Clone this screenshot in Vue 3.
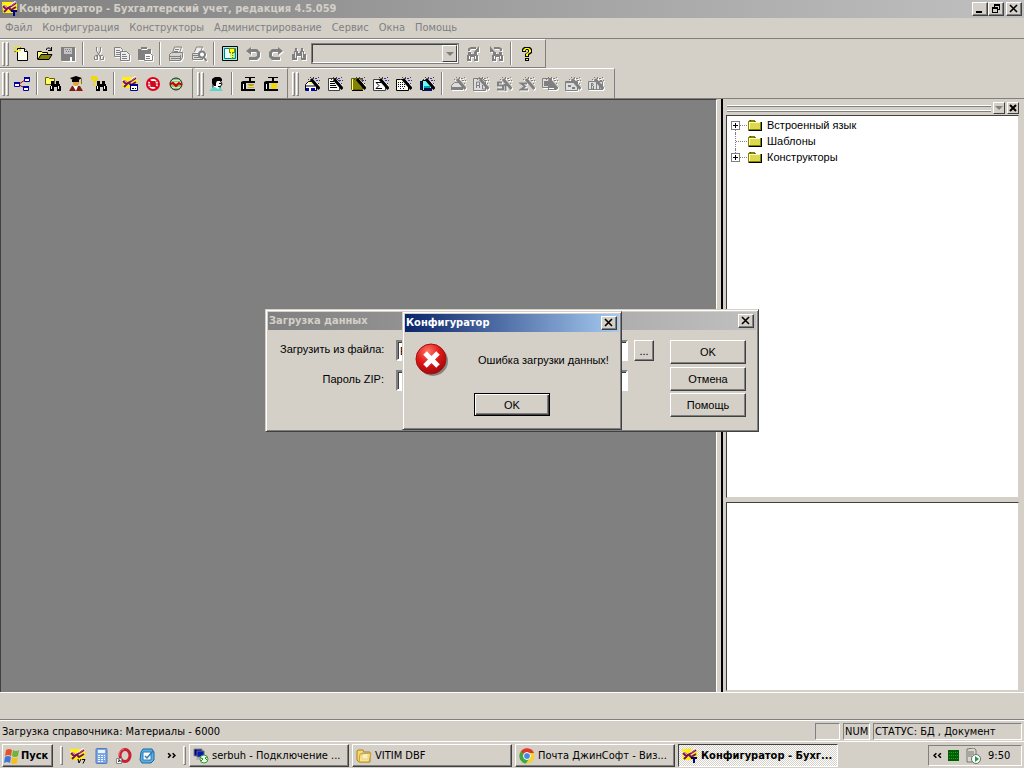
<script setup>
import { h, ref } from 'vue'

const K = '#000'
const G = '#808080'
const sparks = 'M6 1h1v1h-1zM9 1h1v2h-1zM14 1h1v1h-1zM15 4h1v1h-1zM14 7h1v1h-1zM4 3h1v1h-1z'
const wand = [
  ['M9 3L16 10', '', '#f4f4e8', 1],
  ['M7 3L15.5 13', '', K, 3],
  [sparks, '#424142'],
  ['M11 2h2v1h-2zM12 4h2v1h-2z', '#3030d0']
]
const grayWand = [
  ['M7 3L15.5 13', '', G, 3],
  [sparks + 'M11 2h2v1h-2zM12 4h2v1h-2z', G]
]
const binoc = 'M4 2h2v3h1v2h2v-2h1v-3h2v3h1v3h2v6h-5v-4h-4v4h-5v-6h2v-3h1z'
const smallBinoc = 'M6 5h3v3h2v-3h3v3h1v2h1v5h-4v-4h-3v4h-4v-5h1v-2z'
const flash = [
  ['M0 1h11l2 2h2v6h-2v3h-12z', '#fff200'],
  ['M1 4l3 4l4-2l6-5', '', '#fff', 3],
  ['M1 5l3 3l4-2l6-4M2 11l4-4M7 7l2 2l5-3', '', '#7b1052', 2],
  ['M2 4l3 2M9 5l4-3', '', '#e0508c', 1]
]

const icons = {
  app: [...flash, ['M9 9h6v2h-2v4h-2v-4h-2z', '#000084']],
  v7: [...flash, ['M8 11l1 4l2-4M12 11.5h3l-2 4', '', K, 1]],
  doc: [['M3.5 2.5h7l3 3v9h-10z', '#fffff0', K], ['M10.5 2.5v3h3', '#fff', K], ['M0 1h2v2h-2zM3 0h2v2h-2zM1 4h3v2h-3zM5 3h2v2h-2z', '#e8e800'], ['M0 5h2v1h-2zM6 1h1v1h-1z', '#848200']],
  open: [['M0.5 13.5v-8h4l1 1h5v3', '#ffff84', K], ['M1 13.5l3-5h11l-3 5z', '#848200', K], ['M9.5 4v-1l1-1h2l2 2M14.5 1v4M11 4.5h4', '', K]],
  save: [['M1 1h14v14h-13l-1-1z', G], ['M4 2h8v6h-8z', '#c6c3c6'], ['M5 3h1v1h-1zM7 3h1v1h-1zM9 3h1v1h-1zM6 5h1v1h-1zM8 5h1v1h-1zM10 5h1v1h-1z', G], ['M10 11h2v4h-2z', '#fff']],
  cut: [['M5.5 1v4l4 6M9.5 1v4l-4 6', '', G], ['M4.5 9.5h2v4h-3v-3zM9.5 9.5h2l1 1v3h-3z', '', G]],
  copy: [['M0.5 1.5h6l2 2v7h-8zM2 4.5h4M2 6.5h4M2 8.5h4', '#eee', G], ['M6.5 5.5h6l3 3v6h-9zM8 8.5h4M8 10.5h5M8 12.5h5', '#eee', G]],
  paste: [['M1 3h3v-2h6v2h4v11h-13z', G], ['M4.5 3.5h6', '', '#fff'], ['M7.5 7.5h6l2 2v5h-8zM9 10.5h4M9 12.5h4', '#fff', G]],
  print: [['M4.5 7l2-6h7l-2 6', '#eee', G], ['M7 3.5h4M6 5.5h4', '', G], ['M1.5 8.5l2-2h11v5l-2 3h-11z', '#d6d3ce', G], ['M2 10.5h10M3 12.5h9M12.5 9v5', '', G]],
  preview: [['M3.5 6l2-5h6l-2 5', '#eee', G], ['M1.5 7.5h10v6h-10z', '#ddd', G], ['M2 9.5h9M3 11.5h7', '', G], ['M8 8.5a3 3 0 1 0 6 0a3 3 0 1 0-6 0M12.5 11l3 4', '#fff', G, 2]],
  key: [['M0.5 0.5h15v14h-15z', '#9cf0f0', K, 1], ['M2.5 2.5h11v10h-11z', '#84e8e8', '#008284'], ['M3 3h4l2 9h-6z', '#e8ffff'], ['M7 2h6v5h-2v6h-2v-6h-2z', '#848200'], ['M8 3h4v3h-2v6h-1v-6h-1zM10 8h2v1h-2zM10 10h2v1h-2z', '#ffff00']],
  undo: [['M1 5l5-4v2h6l3 3v5l-3 3h-8v-3h6l2-1v-3l-1-1h-5v3z', G]],
  redo: [['M15 5l-5-4v2h-6l-3 3v5l3 3h8v-3h-6l-2-1v-3l1-1h5v3z', G]],
  find: [[binoc, G], ['M4.5 6v6M11.5 6v6', '', '#e8e8e8']],
  findNext: [['M3 6h3v2h3v-2h3v3h1v6h-4v-4h-3v4h-4v-6h1z', G], ['M4 5v-2l2-1h5', '', G, 2], ['M14 0v6h-5z', G], ['M4.5 10v3M10.5 10v3', '', '#fff']],
  findPrev: [['M5 6h3v2h3v-2h3v3h1v6h-4v-4h-3v4h-4v-6h1z', G], ['M13 5v-2l-2-1h-5', '', G, 2], ['M2 0v6h5z', G], ['M6.5 10v3M12.5 10v3', '', '#fff']],
  help: [['M3 5v-2l2-2h6l2 2v4l-3 2v2h-4v-3l3-2v-2h-2v2h-4zM6 12h4v3h-4z', K], ['M4 4l2-2h4l2 2v2l-3 2v2h-2v-2l3-2v-2l-1-1h-2l-1 2h-2zM7 13h2v1h-2z', '#ffff00']],
  tree: [['M5 8L11 4M5 9l6 3', '', '#b00000'], ['M0.5 6.5h5v4h-5zM10.5 1.5h5v4h-5zM9.5 10.5h5v4h-5z', '#fff', '#0000a5'], ['M0 6h6v2h-6zM10 1h6v2h-6zM9 10h6v2h-6z', '#0000a5']],
  folderFind: [['M0.5 1.5h3l1 1h5v6h-9z', '#ffff63', '#636100'], [smallBinoc, K], ['M6 10h1v3h-1zM13 10h1v3h-1z', '#fff']],
  person: [['M5 4h6v4l-3 3l-3-3z', '#e7a542'], ['M2 2l6-2l6 2l-5 3h-3zM4 4h7v2h-7z', K], ['M1 15l3-5h8l3 5z', '#7b2010'], ['M5 10h5l-2 5z', '#fff'], ['M13.5 3v5', '', '#848200']],
  ask: [['M0 4v-2l1-2h4l2 2v2l-3 2v1h-2v-2l2-2v-1h-1v2zM2 8h2v2h-2z', '#f0d800'], [smallBinoc, K], ['M6 10h1v3h-1zM13 10h1v3h-1z', '#fff']],
  flashForm: [...flash, ['M8.5 8.5h7v6h-7z', '#fff', '#000084'], ['M8 8h8v2h-8z', '#0000a5'], ['M10 12h2v1h-2zM13 12h1v1h-1z', K]],
  noBug: [['M2 8a6 6 0 1 0 12 0a6 6 0 1 0-12 0', '#fff', '#e00018', 2], ['M6 5h4l1 3l-1 3h-4l-1-3z', '#c01828'], ['M4 5l3 2M12 5l-3 2M4 11l3-2M12 11l-3-2M3 8h10', '', '#c01828'], ['M4 4l8 8', '', '#e00018', 2]],
  chart: [['M2 8a6 6 0 1 0 12 0a6 6 0 1 0-12 0', '#8cc87c', '#212021', 1], ['M4 4.5h8M3 6.5h10M4 11.5h8', '', '#d0f0c0'], ['M2 8l3-1l3 3l3-3l3 2', '', '#d00000', 2]],
  head: [['M4 4h7l2 4l-2 3v3h-7z', '#fff', K], ['M3 3l3-2h5l2 2v2h-5l-1 2v3h-2l-2-3z', K], ['M0 15l4-4h2l3 2l2-2l3 4z', '#5ad6ce'], ['M10 7h2v1h-2zM9 10h2v1h-2z', K]],
  press: [['M5 1h10v1h-4v4h-2v-4h-4z', K], ['M1 6l2-1h12v2h-9v6h9v2h-14z', K], ['M3 8h1v5h-1z', '#fff'], ['M8 8h6v1l-2 1h-2l-2-1z', '#b5a600'], ['M8 11h6v1h-6z', '#c8b800']],
  pressBall: [['M5 1h10v1h-4v4h-2v-4h-4z', K], ['M1 6l2-1h12v2h-9v6h9v2h-14z', K], ['M3 8h1v5h-1z', '#fff'], ['M9 7h4l1 2v2l-1 2h-4l-1-2v-2z', '#f0d800']],
  wandHouse: [['M1.5 8.5l3-3h4l4 4v5h-11z', '#fff', K], ['M2 9h9v2h-9z', '#848284'], ['M2 12h9v3h-9z', '#0000a6'], ['M5 12h2v3h-2z', '#fff'], ['M5 7h3v1h-3z', '#ffff00'], ...wand],
  wandDoc: [['M1.5 2.5h8l3 3v9h-11z', '#fff', '#424142'], ...wand, ['M3 5.5h4M3 7.5h5M3 9.5h6M3 11.5h7', '', K]],
  wandBook: [['M1.5 2.5h11v11h-11z', '#848200', '#636100'], ['M2.5 3v11', '', '#ffff84'], ['M2 14.5h11', '', K], ...wand],
  wandSum: [['M0.5 3.5h9l3 3v8h-12z', '#fff', '#424142'], ...wand, ['M8 6.5h-5l3 3l-3 3h6', '', K]],
  wandGrid: [['M0.5 3.5h9l3 3v8h-12z', '#ffffde', K], ...wand, ['M2 6h1v1h-1zM4 6h1v1h-1zM6 6h1v1h-1zM2 8h1v1h-1zM4 8h1v1h-1zM6 8h1v1h-1zM8 8h1v1h-1zM2 10h1v1h-1zM4 10h1v1h-1zM6 10h1v1h-1zM8 10h1v1h-1zM4 12h1v1h-1zM7 12h1v1h-1z', '#00007b']],
  wandReport: [['M3.5 4.5h5l4 4v6h-9z', '#63ffff', K], ['M1 5h2v9h-2zM5 12h8v3h-8z', '#101050'], ['M5 10h6v2h-6z', '#00a6a5'], ...wand],
  g1: [['M1.5 9.5l3-3h4l4 4v3h-11z', '#ddd', G], ['M1 11h12v3h-12z', G], ...grayWand],
  g2: [['M0.5 2.5h9l3 3v9h-12z', '#ddd', G], ...grayWand, ['M3.5 12v-6h3v6M3 9.5h3M9.5 9v4h3', '', G]],
  g3: [...grayWand, ['M6 6.5h-4v3h5v4h-6M9.5 8v7M8 9h5', '', G, 2]],
  g4: [...grayWand, ['M8 7.5h-6l4 3l-4 3h7', '', G, 2]],
  g5: [['M0.5 2.5h9v9h-9z', '#ddd', G], ['M2 5h7v5h-7zM6 9h8v5h-8z', G], ...grayWand, ['M7 12.5h5', '', '#fff']],
  g6: [['M0.5 5.5h12v9h-12z', '#ddd', G], ['M1 5h11v2h-11zM3 9h3v2h-3zM7 11h3v2h-3z', G], ...grayWand],
  g7: [['M0.5 5.5h14v8h-14z', '#ddd', G], ...grayWand, ['M3.5 7v6M3 7.5h2v2h-2M5.5 10v3h-2M8.5 7v6M11.5 8v5h3M11 8.5h3M11 10.5h2', '', G, 1]],
  folder: [['M2 4l1-1h4l2 2h6v9h-13l-1-1z', K], ['M1 4h2l1-1h3l1 2h6v8h-13z', '#848200'], ['M2 5h11v7h-11z', '#dcd850'], ['M2 5h11v1h-11zM2 6h1v6h-1z', '#ffffb5']]
}

const Glyph = (props) =>
  h(
    'svg',
    { class: 'glyph', viewBox: '0 0 16 16', 'aria-hidden': 'true' },
    icons[props.name].map(([d, fill, stroke, width]) =>
      h('path', { d, fill: fill || 'none', stroke: stroke || 'none', 'stroke-width': width || 1 })
    )
  )
Glyph.props = ['name']

const menus = ['Файл', 'Конфигурация', 'Конструкторы', 'Администрирование', 'Сервис', 'Окна', 'Помощь']
const sep = { sep: true }
const on = (name, label) => ({ name, label })
const off = (name, label) => ({ name, label, off: true })
const fileTools = [
  on('doc', 'Новый'), on('open', 'Открыть'), off('save', 'Сохранить'), sep,
  off('cut', 'Вырезать'), off('copy', 'Копировать'), off('paste', 'Вставить'), sep,
  off('print', 'Печать'), off('preview', 'Просмотр'), sep,
  on('key', 'Окно'), off('undo', 'Отменить'), off('redo', 'Вернуть'), off('find', 'Найти')
]
const searchTools = [off('findNext', 'Найти далее'), off('findPrev', 'Найти назад'), sep, on('help', 'Справка')]
const lowerBars = [
  [on('tree', 'Метаданные'), sep, on('folderFind', 'Поиск'), on('person', 'Синтаксис'), on('ask', 'Помощник'), sep,
    on('flashForm', '1С:Предприятие'), on('noBug', 'Отладчик'), on('chart', 'Монитор')],
  [on('head', 'Пользователи'), sep, on('press', 'Сжать'), on('pressBall', 'Развернуть')],
  [on('wandHouse', 'Справочник'), on('wandDoc', 'Документ'), on('wandBook', 'Журнал'), on('wandSum', 'Отчет'),
    on('wandGrid', 'Таблица'), on('wandReport', 'Запрос'), sep,
    off('g1', 'Ввод'), off('g2', 'Текст'), off('g3', 'Счет'), off('g4', 'Сумма'), off('g5', 'Картинка'), off('g6', 'Форма'), off('g7', 'Поле')]
]
const nodes = [
  { text: 'Встроенный язык', plus: true },
  { text: 'Шаблоны', plus: false },
  { text: 'Конструкторы', plus: true }
]
const fileName = ref('E:\\')
const password = ref('')
</script>

<template>
  <div class="screen">
    <header class="titlebar">
      <Glyph name="app" />
      <h1>Конфигуратор - Бухгалтерский учет, редакция 4.5.059</h1>
      <button class="cap" aria-label="Свернуть"><svg viewBox="0 0 10 10" shape-rendering="crispEdges"><path d="M1 7h6v2H1z" /></svg></button>
      <button class="cap" aria-label="Восстановить"><svg viewBox="0 0 10 10" shape-rendering="crispEdges"><path d="M3 0h6v6H7V5h1V2H4v1H3zM1 3h6v6H1zM2 5v3h4V5z" fill-rule="evenodd" /></svg></button>
      <button class="cap close" aria-label="Закрыть"><svg viewBox="0 0 10 10"><path d="M1 1l7 7M8 1l-7 7" class="cross" /></svg></button>
    </header>
    <nav class="menu">
      <button v-for="m in menus" :key="m">{{ m }}</button>
    </nav>

    <div class="row">
      <div class="bar first">
        <i class="grip"></i>
        <template v-for="(t, i) in fileTools" :key="i">
          <i v-if="t.sep" class="sep"></i>
          <button v-else class="tool" :class="{ off: t.off }" :aria-label="t.label"><Glyph :name="t.name" /></button>
        </template>
        <span class="combo"><select aria-label="Строка поиска"><option></option></select><i class="drop"></i></span>
        <template v-for="(t, i) in searchTools" :key="'s' + i">
          <i v-if="t.sep" class="sep"></i>
          <button v-else class="tool" :class="{ off: t.off }" :aria-label="t.label"><Glyph :name="t.name" /></button>
        </template>
      </div>
    </div>
    <div class="row second">
      <div v-for="(bar, b) in lowerBars" :key="b" class="bar">
        <i class="grip"></i>
        <template v-for="(t, i) in bar" :key="i">
          <i v-if="t.sep" class="sep"></i>
          <button v-else class="tool" :class="{ off: t.off }" :aria-label="t.label"><Glyph :name="t.name" /></button>
        </template>
      </div>
    </div>

    <main class="work">
      <div class="mdi"></div>
      <aside class="panel">
        <div class="panel-head">
          <i class="lines"></i>
          <button class="mini" aria-label="Свернуть панель"><i class="arrow"></i></button>
          <button class="mini" aria-label="Закрыть панель"><svg viewBox="0 0 8 8"><path d="M1 1l6 6M7 1l-6 6" class="cross" /></svg></button>
        </div>
        <ul class="tree">
          <li v-for="n in nodes" :key="n.text">
            <i class="branch"><i v-if="n.plus" class="plus"></i></i>
            <Glyph name="folder" /><span>{{ n.text }}</span>
          </li>
        </ul>
        <div class="pane"></div>
      </aside>
    </main>
    <div class="blank"></div>
    <footer class="status">
      <span class="msg">Загрузка справочника: Материалы - 6000</span>
      <span class="cell empty"></span>
      <span class="cell num">NUM</span>
      <span class="cell state">СТАТУС: БД , Документ</span>
    </footer>

    <div class="taskbar">
      <button class="start">
        <svg class="ico" viewBox="0 0 16 16"><path d="M2 2q3-2 6 0l-1 6q-3-2-6 0z" fill="#e8502a" /><path d="M9 2q3 2 6 0l-1 6q-3 2-6 0z" fill="#6cb43c" /><path d="M1 9q3-2 6 0l-1 6q-3-2-6 0z" fill="#3c78d8" /><path d="M8 9q3 2 6 0l-1 6q-3 2-6 0z" fill="#f4c020" /></svg>Пуск
      </button>
      <i class="tsep"></i>
      <div class="quick">
        <button aria-label="1С:Предприятие"><Glyph name="v7" /></button>
        <button aria-label="Калькулятор"><svg class="ico" viewBox="0 0 16 16"><rect x="3" y="0.5" width="11" height="15" rx="1" fill="#78a8e8" stroke="#5878b8" /><path d="M5 2h7v3H5z" fill="#e8f4ff" /><path d="M5 7h2v1H5zM8 7h2v1H8zM11 7h1v1h-1zM5 9h2v1H5zM8 9h2v1H8zM11 9h1v1h-1zM5 11h2v1H5zM8 11h2v1H8zM11 11h1v1h-1zM5 13h2v1H5zM8 13h2v1H8z" fill="#fff" /></svg></button>
        <button aria-label="Opera"><svg class="ico" viewBox="0 0 16 16"><ellipse cx="9" cy="7.5" rx="5" ry="6" fill="none" stroke="#c82030" stroke-width="3" /><path d="M8 1q-5 1-5 7" fill="none" stroke="#f07080" /><path d="M0.5 10.5h5v5h-5z" fill="#fff" stroke="#888" /><path d="M2 14l2-2M2 12h2v2" stroke="#333" fill="none" /></svg></button>
        <button aria-label="Outlook"><svg class="ico" viewBox="0 0 16 16"><path d="M4 1l9 0 2 3 0 8-3 3H3l-2-3 1-8z" fill="#58b0dc" stroke="#1868a8" /><path d="M4 4h8v8H4z" fill="#fff" stroke="#2878b8" /><path d="M6 8l2 2 6-7" fill="none" stroke="#3878a8" stroke-width="1.5" /></svg></button>
        <button class="more" aria-label="Еще"><svg viewBox="0 0 8 7"><path d="M1 1l2 2-2 2M5 1l2 2-2 2" class="chev" /></svg></button>
      </div>
      <i class="tsep"></i>
      <div class="tasks">
        <button class="task"><svg class="ico" viewBox="0 0 16 16"><path d="M1 1h8v7H1z" fill="#000084" stroke="#888" /><path d="M4 3h7v6H4z" fill="#0818b8" stroke="#667" /><path d="M3 10h6v2H3z" fill="#b8b8b0" /><circle cx="11" cy="11" r="4" fill="#e8ffe8" stroke="#389838" /><path d="M8 10l2 1-2 2M14 9l-2 1 2 2" fill="none" stroke="#208828" /></svg><span>serbuh - Подключение ...</span></button>
        <button class="task"><svg class="ico" viewBox="0 0 16 16"><path d="M1 3l1-1h5l1 2h6v10H3L1 12z" fill="#f8d868" stroke="#a88020" /><path d="M6 5h6v6H6z" fill="#fff" stroke="#88a8c8" /><path d="M4 6l11-1-2 9H3z" fill="#ffe890" fill-opacity=".7" stroke="#c8a038" /></svg><span>VITIM DBF</span></button>
        <button class="task"><svg class="ico" viewBox="0 0 16 16"><circle cx="8" cy="8" r="7.5" fill="#f8d030" /><path d="M8 8L1.5 4A7.5 7.5 0 0 1 15 5H8z" fill="#e03828" /><path d="M8 8L1.5 4A7.5 7.5 0 0 0 7 15.5l3-5z" fill="#40a840" /><circle cx="8" cy="8" r="3.5" fill="#4888e0" stroke="#fff" /></svg><span>Почта ДжинСофт - Виз...</span></button>
        <button class="task active"><Glyph name="app" /><span>Конфигуратор - Бухг...</span></button>
      </div>
      <div class="tray">
        <svg class="less" viewBox="0 0 8 7"><path d="M3 1L1 3l2 2M7 1L5 3l2 2" class="chev" /></svg>
        <svg class="grid" viewBox="0 0 11 11" shape-rendering="crispEdges"><path d="M0 0h11v11H0z" fill="#006000" /><path d="M1 2h9M1 5h9M1 8h9" stroke="#20a030" stroke-dasharray="1 1" /></svg>
        <svg class="ico" viewBox="0 0 16 16"><path d="M2 1l7-1 2 2v12H2z" fill="#d8d8c8" stroke="#777" /><path d="M3 4h6M3 6h6M3 8h4" stroke="#777" /><circle cx="11" cy="11" r="4.5" fill="#fff" stroke="#667" /><path d="M10 8l4 3-4 3z" fill="#18a028" /></svg>
        <time>9:50</time>
      </div>
    </div>

    <section class="window load" role="dialog" aria-label="Загрузка данных">
      <header class="cap-row dim"><h2>Загрузка данных</h2><button class="cap" aria-label="Закрыть"><svg viewBox="0 0 10 10"><path d="M1 1l7 7M8 1l-7 7" class="cross" /></svg></button></header>
      <form class="load-body" @submit.prevent>
        <div class="fields">
          <label for="file">Загрузить из файла:</label>
          <input id="file" v-model="fileName" type="text" />
          <button class="btn dots" aria-label="Выбрать файл">...</button>
          <label for="zip">Пароль ZIP:</label>
          <input id="zip" v-model="password" type="password" />
        </div>
        <div class="actions">
          <button class="btn">OK</button>
          <button class="btn">Отмена</button>
          <button class="btn">Помощь</button>
        </div>
      </form>
    </section>

    <section class="window alert" role="alertdialog" aria-label="Конфигуратор">
      <header class="cap-row"><h2>Конфигуратор</h2><button class="cap" aria-label="Закрыть"><svg viewBox="0 0 10 10"><path d="M1 1l7 7M8 1l-7 7" class="cross" /></svg></button></header>
      <div class="alert-body">
        <svg class="error" viewBox="0 0 34 34">
          <defs><radialGradient id="ball" cx=".4" cy=".25" r=".8"><stop offset="0" stop-color="#ff7868" /><stop offset=".5" stop-color="#e01818" /><stop offset="1" stop-color="#980808" /></radialGradient></defs>
          <circle cx="18" cy="18" r="15" fill="#555" fill-opacity=".6" /><circle cx="16" cy="16" r="15" fill="url(#ball)" stroke="#a81010" /><path d="M10 10l13 13M23 10L10 23" stroke="#fff" stroke-width="5" />
        </svg>
        <p>Ошибка загрузки данных!</p>
      </div>
      <button class="btn default">OK</button>
    </section>
  </div>
</template>

<style>
html, body, #app { height: 100%; margin: 0; }
</style>
<style scoped>
.screen {
  --face: #d4d0c8; --dark: #808080; --deep: #404040;
  position: relative; display: grid; height: 100%; min-height: 600px; overflow: hidden;
  grid-template-rows: 18px 21px 29px 30px minmax(0, 1fr) 28px 21px 27px;
  grid-template-columns: minmax(0, 1fr);
  background: var(--face); color: #000; font: 11px/14px "DejaVu Sans Condensed", "DejaVu Sans", sans-serif;
}
.screen *, .screen *::before, .screen *::after { box-sizing: border-box; }
button, input, select { font: inherit; color: inherit; margin: 0; padding: 0; border: 0; border-radius: 0; background: none; }
h1, h2, p, ul { margin: 0; padding: 0; font-size: 11px; }
h1, h2 { font-weight: 700; }
.glyph, .ico { display: block; flex: none; width: 16px; height: 16px; }
.cross { stroke: #000; stroke-width: 2; fill: none; }
.window .cross, .titlebar .cross { stroke-width: 1.6; }
.chev { stroke: #000; stroke-width: 1.4; fill: none; }
.titlebar { display: flex; align-items: center; padding: 0 2px; background: linear-gradient(90deg, #808080, #c0c0c0); color: var(--face); }
.titlebar h1 { flex: 1; padding-left: 1px; white-space: nowrap; }
.cap { display: grid; place-items: center; width: 16px; height: 14px; flex: none; background: var(--face); border: 1px solid; border-color: #fff var(--deep) var(--deep) #fff; box-shadow: inset -1px -1px var(--dark); }
.cap svg { width: 10px; height: 10px; }
.cap.close { margin-left: 2px; }
.menu { display: flex; gap: 10px; padding: 0 5px; color: var(--dark); border-bottom: 1px solid var(--dark); }
.row { display: flex; min-width: 0; }
.bar { display: flex; align-items: center; padding: 0 5px 0 2px; border: solid; border-width: 1px 1px 1px 0; border-color: #fff var(--dark) var(--dark); }
.first { padding-right: 7px; }
.second { gap: 2px; }
.second .bar { border-bottom: 0; }
.second .bar:last-child { padding-right: 7px; }
.grip { display: flex; gap: 1px; width: 8px; height: 24px; flex: none; }
.grip::before, .grip::after { content: ""; width: 3px; height: 100%; border: 1px solid; border-color: #fff var(--dark) var(--dark) #fff; }
.tool { display: grid; place-items: center; width: 23px; height: 22px; flex: none; }
.off .glyph { filter: drop-shadow(1px 1px 0 #fff); }
.sep { width: 2px; height: 23px; margin: 0 3px; flex: none; border-left: 1px solid var(--dark); border-right: 1px solid #fff; }
.combo { position: relative; width: 148px; height: 21px; margin: 0 2px 0 1px; }
.combo select { appearance: none; width: 100%; height: 100%; background: var(--face); border: 2px solid; border-color: var(--deep) #fff #fff var(--deep); outline: 1px solid var(--dark); outline-offset: -1px; }
.drop { position: absolute; right: 2px; top: 2px; width: 15px; height: 17px; border: 1px solid; border-color: #fff var(--deep) var(--deep) #fff; pointer-events: none; }
.drop::after, .arrow { content: ""; position: absolute; left: 3px; top: 6px; border: 4px solid transparent; border-top-color: var(--dark); border-bottom: 0; }
.work { display: grid; grid-template-columns: minmax(0, 717fr) minmax(0, 307fr); min-height: 0; border-top: 1px solid var(--dark); }
.mdi { background: #808080; border: 1px solid var(--deep); border-right: 1px solid #fff; border-bottom: 0; }
.panel { display: grid; grid-template-rows: 15px minmax(0, 384fr) minmax(0, 193fr); min-height: 0; margin-left: 4px; padding: 1px 5px 1px 3px; border-left: 2px solid #000; }
.panel-head { display: flex; align-items: center; gap: 2px; padding-left: 1px; }
.lines { flex: 1; height: 6px; border: solid #fff; border-width: 1px 0; box-shadow: 0 1px var(--dark), inset 0 1px var(--dark); }
.mini { position: relative; display: grid; place-items: center; width: 12px; height: 12px; border: 1px solid; border-color: #fff var(--deep) var(--deep) #fff; }
.mini svg { width: 8px; height: 8px; }
.arrow { left: 1px; top: 3px; }
.tree, .pane { background: #fff; border: 1px solid; border-color: var(--deep) var(--face) var(--face) var(--deep); }
.tree { list-style: none; padding: 1px 0 0 4px; font-family: "Liberation Sans", sans-serif; }
.tree li { display: flex; align-items: center; height: 16px; }
.branch { position: relative; width: 16px; height: 16px; flex: none; }
.branch::before { content: ""; position: absolute; left: 5px; right: 0; top: 8px; border-top: 1px dotted var(--dark); }
.branch::after { content: ""; position: absolute; left: 4px; top: 0; bottom: 0; border-left: 1px dotted var(--dark); }
li:first-child .branch::after { top: 8px; }
li:last-child .branch::after { bottom: 8px; }
.plus { position: absolute; z-index: 1; left: 0; top: 4px; width: 9px; height: 9px; border: 1px solid var(--dark); background: linear-gradient(#000, #000) center / 5px 1px no-repeat, linear-gradient(#000, #000) center / 1px 5px no-repeat, #fff; }
.tree span { margin-left: 4px; }
.pane { margin-top: 4px; }
.blank { border-top: 1px solid #fff; border-bottom: 1px solid var(--dark); }
.status { display: flex; align-items: center; gap: 3px; padding: 1px 2px 0; border-top: 1px solid #fff; white-space: nowrap; }
.msg { flex: 1; }
.cell { height: 17px; padding: 0 1px; border: 1px solid; border-color: var(--dark) #fff #fff var(--dark); line-height: 16px; }
.empty { width: 25px; }
.num { width: 27px; }
.state { width: 149px; }
.taskbar { display: flex; align-items: center; gap: 7px; padding: 1px 2px 0; border-top: 1px solid #fff; white-space: nowrap; }
.start, .task { display: flex; align-items: center; gap: 3px; height: 23px; border: 1px solid; border-color: #fff var(--deep) var(--deep) #fff; box-shadow: inset -1px -1px var(--dark); }
.start { width: 51px; padding-left: 1px; gap: 1px; font-weight: 700; }
.tsep { width: 3px; height: 19px; flex: none; border: 1px solid; border-color: #fff var(--dark) var(--dark) #fff; }
.quick { display: flex; align-items: center; gap: 7px; width: 106px; }
.more { width: 10px; height: 14px; margin-left: 5px; }
.more svg, .less { display: block; width: 9px; height: 8px; }
.tasks { display: flex; flex: 1; gap: 3px; margin-left: -4px; min-width: 0; }
.task { flex: 0 1 160px; min-width: 0; padding: 0 3px; overflow: hidden; }
.task.active { background: repeating-conic-gradient(#fff 0 25%, #d4d0c8 0 50%) 0 0 / 2px 2px; border-color: var(--deep) #fff #fff var(--deep); box-shadow: none; font-weight: 700; }
.tray { display: flex; align-items: center; gap: 6px; width: 94px; height: 21px; padding-left: 4px; border: 1px solid; border-color: var(--dark) #fff #fff var(--dark); }
.grid { width: 11px; height: 11px; }
.tray time { margin-left: 1px; }
.window { position: absolute; left: 50%; transform: translateX(-50%); background: var(--face); border: 1px solid; border-color: var(--face) var(--deep) var(--deep) var(--face); box-shadow: inset 1px 1px #fff, inset -1px -1px var(--dark); padding: 2px; font-family: "Liberation Sans", sans-serif; }
.window h2 { font-family: "DejaVu Sans Condensed", "DejaVu Sans", sans-serif; }
.cap-row { display: flex; align-items: center; justify-content: space-between; height: 18px; padding: 0 2px 0 1px; color: #fff; background: linear-gradient(90deg, #0a246a, #a6caf0); }
.cap-row.dim { color: var(--face); background: linear-gradient(90deg, #808080, #c0c0c0); }
.load { top: 309px; width: 494px; height: 123px; }
.alert { top: 311px; width: 220px; height: 119px; }
.load-body { display: flex; justify-content: space-between; padding: 10px 10px 0 12px; }
.fields { display: grid; grid-template-columns: 110px 232px 20px; grid-auto-rows: 21px; gap: 9px 6px; }
.fields label { padding-right: 6px; text-align: right; line-height: 18px; white-space: nowrap; }
.fields input { min-width: 0; padding: 0 2px; background: #fff; border: 2px solid; border-color: var(--dark) #fff #fff var(--dark); box-shadow: inset 1px 1px var(--deep); }
.btn { height: 24px; background: var(--face); border: 1px solid; border-color: #fff var(--deep) var(--deep) #fff; box-shadow: inset -1px -1px var(--dark); }
.dots { height: 21px; }
.actions { display: grid; gap: 2px; width: 76px; height: 78px; }
.alert-body { display: flex; align-items: center; gap: 29px; height: 53px; padding: 2px 8px 0 10px; }
.error { width: 34px; height: 34px; flex: none; }
.alert p { white-space: nowrap; }
.default { display: block; width: 76px; height: 23px; margin: 8px auto 0; border-color: #000; box-shadow: inset 1px 1px #fff, inset -1px -1px var(--deep), inset -2px -2px var(--dark); }
</style>
